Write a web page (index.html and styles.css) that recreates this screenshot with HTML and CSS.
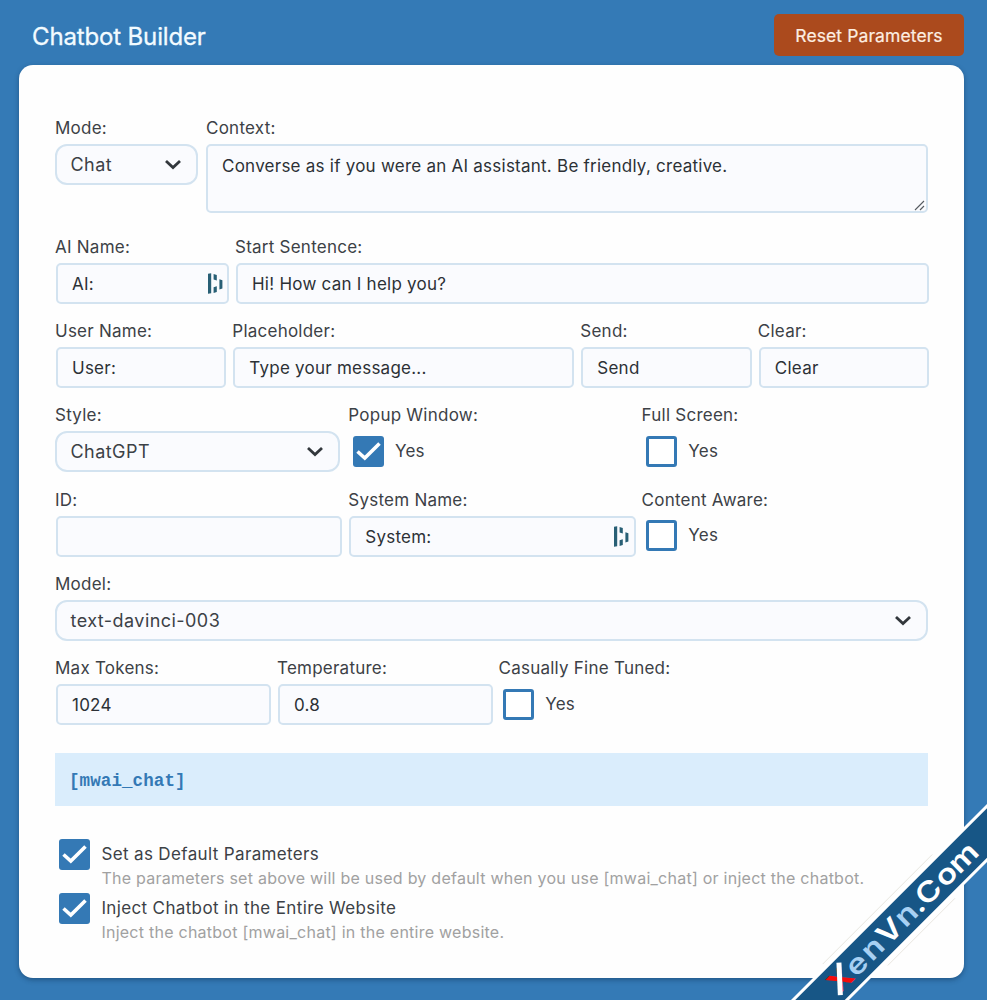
FILE: index.html
```html
<!DOCTYPE html>
<html lang="en">
<head>
<meta charset="utf-8">
<title>Chatbot Builder</title>
<link rel="stylesheet" href="styles.css">
</head>
<body>
<svg class="defs" width="0" height="0">
  <symbol id="chevron" viewBox="0 0 18 12"><path d="M2 2 L9 8.5 L16 2" fill="none" stroke="#32373c" stroke-width="2.8"/></symbol>
  <symbol id="check" viewBox="0 0 31 31"><path d="M4.5 15.5 L11.8 22 L26.5 7.5" fill="none" stroke="#fff" stroke-width="3.6"/></symbol>
  <symbol id="vault" viewBox="0 0 15 21"><path d="M0 0.8 L3.2 0.2 V20.2 L0 20.8Z M5.6 1 L8.8 2 V7.6 L5.6 6.4Z M5.6 14.2 L8.8 13.2 V19 L5.6 20Z M11.4 6.2 L14.4 7.2 V15.5 L11.4 16.5Z" fill="#285f75"/></symbol>
  <symbol id="grip" viewBox="0 0 12 12"><path d="M1 11 L10 2 M6 11 L10 7" fill="none" stroke="#555b61" stroke-width="1.1"/></symbol>
</svg>
<header class="header">
  <h1 class="title">Chatbot Builder</h1>
  <button class="reset">Reset Parameters</button>
</header>
<main class="card">
  <section class="row row-context">
    <div class="field"><label class="label">Mode:</label><div class="select">Chat<svg class="chevron"><use href="#chevron"/></svg></div></div>
    <div class="field"><label class="label">Context:</label><div class="input area">Converse as if you were an AI assistant. Be friendly, creative.<svg class="grip"><use href="#grip"/></svg></div></div>
  </section>
  <section class="row row-start">
    <div class="field"><label class="label">AI Name:</label><div class="input">AI:<svg class="vault"><use href="#vault"/></svg></div></div>
    <div class="field"><label class="label">Start Sentence:</label><div class="input">Hi! How can I help you?</div></div>
  </section>
  <section class="row row-user">
    <div class="field"><label class="label">User Name:</label><div class="input">User:</div></div>
    <div class="field"><label class="label">Placeholder:</label><div class="input">Type your message...</div></div>
    <div class="field"><label class="label">Send:</label><div class="input">Send</div></div>
    <div class="field"><label class="label">Clear:</label><div class="input">Clear</div></div>
  </section>
  <section class="row row-thirds">
    <div class="field"><label class="label">Style:</label><div class="select">ChatGPT<svg class="chevron"><use href="#chevron"/></svg></div></div>
    <div class="field"><label class="label">Popup Window:</label><div class="choice"><span class="box checked"><svg class="tick"><use href="#check"/></svg></span>Yes</div></div>
    <div class="field"><label class="label">Full Screen:</label><div class="choice"><span class="box"></span>Yes</div></div>
  </section>
  <section class="row row-thirds">
    <div class="field"><label class="label">ID:</label><div class="input"></div></div>
    <div class="field"><label class="label">System Name:</label><div class="input">System:<svg class="vault"><use href="#vault"/></svg></div></div>
    <div class="field"><label class="label">Content Aware:</label><div class="choice"><span class="box"></span>Yes</div></div>
  </section>
  <section class="row">
    <div class="field"><label class="label">Model:</label><div class="select model">text-davinci-003<svg class="chevron"><use href="#chevron"/></svg></div></div>
  </section>
  <section class="row row-tokens">
    <div class="field"><label class="label">Max Tokens:</label><div class="input">1024</div></div>
    <div class="field"><label class="label">Temperature:</label><div class="input">0.8</div></div>
    <div class="field"><label class="label">Casually Fine Tuned:</label><div class="choice"><span class="box"></span>Yes</div></div>
  </section>
  <div class="shortcode">[mwai_chat]</div>
  <section class="options">
    <div class="option"><span class="box checked"><svg class="tick"><use href="#check"/></svg></span><div class="option-text"><div class="option-name">Set as Default Parameters</div><div class="hint">The parameters set above will be used by default when you use [mwai_chat] or inject the chatbot.</div></div></div>
    <div class="option"><span class="box checked"><svg class="tick"><use href="#check"/></svg></span><div class="option-text"><div class="option-name">Inject Chatbot in the Entire Website</div><div class="hint">Inject the chatbot [mwai_chat] in the entire website.</div></div></div>
  </section>
</main>
<svg class="ribbon" viewBox="780 790 207 210">
  <g transform="translate(910 910) rotate(-45)">
    <path d="M-100 -23.5 H55 M-55 23.5 H40" stroke="#e4e2da" stroke-width="0.8"/>
    <rect x="-160" y="-20.5" width="320" height="41" fill="#fff"/>
    <rect x="-160" y="-17.5" width="320" height="35" fill="#175686"/>
    <text class="brand" y="10" text-anchor="middle" transform="scale(1.2 1)"><tspan class="brand-x" x="-82.2" fill="#f40b0b">X</tspan><tspan x="-63.5" fill="#a7d0f3">e</tspan><tspan x="-44.6" fill="#a7d0f3">n</tspan><tspan x="-24.5" fill="#fff">V</tspan><tspan x="-5" fill="#a7d0f3">n</tspan><tspan x="7.6" fill="#fff">.</tspan><tspan x="21.5" fill="#fff">C</tspan><tspan x="41.8" fill="#fff">o</tspan><tspan x="62.2" fill="#fff">m</tspan></text>
    <path d="M-109.5 11 L-87.5 -13" stroke="#fff" stroke-width="5"/>
  </g>
</svg>
</body>
</html>
```
FILE: styles.css
```css
* { box-sizing: border-box; }
body {
  margin: 0;
  height: 1000px;
  overflow: hidden;
  position: relative;
  padding: 0 23px 0 19px;
  background: #347ab6;
  color: #3c4146;
  font: 17px/23px Inter, "Liberation Sans", sans-serif;
  letter-spacing: 0.24px;
}
.defs { position: absolute; }
.header {
  height: 65px;
  padding: 14px 0 0 13px;
  display: flex;
  justify-content: space-between;
  align-items: flex-start;
}
.title { margin: 7px 0 0; font-size: 24px; line-height: 32px; font-weight: 400; letter-spacing: -0.15px; color: #f2fbff; -webkit-text-stroke: 0.3px #f2fbff; }
.reset {
  width: 190px;
  height: 42px;
  padding: 1px 0 0;
  border: 0;
  border-radius: 5px;
  background: #ab4a1d;
  color: #fdeee2;
  font: inherit;
  font-size: 17.5px;
  letter-spacing: 0.1px;
  -webkit-text-stroke: 0.2px #fdeee2;
}
.card {
  height: 913px;
  padding: 51px 36px 0;
  border-radius: 14px;
  background: #fefefe;
  box-shadow: 0 2px 5px rgba(10, 45, 80, 0.45);
}
.row { display: grid; height: 84.4px; }
.row-context { height: 118.5px; grid-template-columns: 151px 1fr; }
.row-start { grid-template-columns: 180px 1fr; }
.row-user { grid-template-columns: 177.3px 348px 177.5px 1fr; }
.row-thirds { grid-template-columns: 293.3px 293.3px 1fr; }
.row-tokens { grid-template-columns: 222px 221.5px 1fr; }
.field { display: flex; flex-direction: column; gap: 4px; }
.label { height: 24px; line-height: 25px; }
.select, .input {
  position: relative;
  height: 41px;
  padding: 0 14px;
  border: 2px solid #d3e3f0;
  background: #fafbfe;
  line-height: 38px;
}
.select { margin-right: 8px; padding-left: 13.5px; border-radius: 12px; font-size: 18px; letter-spacing: 0.45px; }
.row > .field:last-child .select { margin-right: 0; }
.input { margin: 0 6px 0 1px; border-radius: 5px; color: #2c3136; }
.row > .field:last-child .input { margin-right: -1px; }
.row > .field:last-child .area { height: 69px; margin: 0; line-height: 40px; }
.chevron { position: absolute; width: 18px; height: 12px; right: 14px; top: 13px; }
.vault { position: absolute; width: 15px; height: 21px; right: 4.5px; top: 8px; }
.grip { position: absolute; width: 12px; height: 12px; right: 0; bottom: 0; }
.choice { display: flex; align-items: center; gap: 11px; height: 31px; padding-left: 4.7px; margin-top: 4.7px; }
.box { flex: none; width: 31px; height: 31px; border: 3px solid #3479b5; border-radius: 3px; background: #fff; }
.checked { border: 0; background: #3479b5; }
.tick { display: block; width: 31px; height: 31px; }
.shortcode {
  height: 53px;
  margin-top: 12.3px;
  padding-left: 14px;
  background: #daedfc;
  color: #3479b5;
  font: bold 17.5px/56px "Liberation Mono", monospace;
  letter-spacing: 0.1px;
}
.options { padding: 33px 0 0 4.4px; }
.option { display: flex; gap: 11px; height: 54px; }
.option-text { padding-top: 3px; }
.option-name { line-height: 24px; letter-spacing: 0.36px; }
.hint { font-size: 16px; line-height: 25px; letter-spacing: 0.25px; color: #a1a1a1; white-space: nowrap; }
.ribbon { position: absolute; left: 780px; top: 790px; width: 207px; height: 210px; }
.brand { font: 600 28px Inter, sans-serif; letter-spacing: 0; }
.brand-x { font-weight: 700; }
```
